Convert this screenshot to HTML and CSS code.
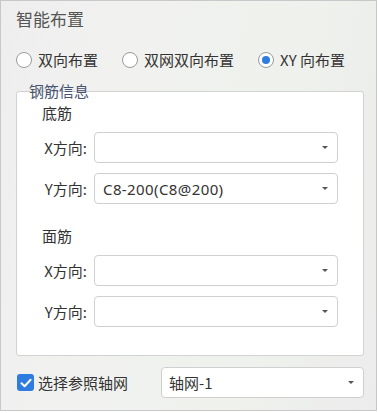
FILE: index.html
```html
<!DOCTYPE html>
<html lang="zh-CN">
<head>
<meta charset="utf-8">
<title>智能布置</title>
<link rel="stylesheet" href="styles.css">
</head>
<body>
<div class="window">
  <div class="title">智能布置</div>
  <div class="radios">
    <label class="radio"><span class="dot"></span>双向布置</label>
    <label class="radio"><span class="dot"></span>双网双向布置</label>
    <label class="radio"><span class="dot checked"></span>XY 向布置</label>
  </div>
  <div class="legend">钢筋信息</div>
  <div class="group">
    <div class="section-title">底筋</div>
    <div class="field">
      <span class="label">X方向:</span>
      <div class="select"><span class="value"></span><span class="arrow"></span></div>
    </div>
    <div class="field">
      <span class="label">Y方向:</span>
      <div class="select"><span class="value latin">C8-200(C8@200)</span><span class="arrow"></span></div>
    </div>
    <div class="section-title second">面筋</div>
    <div class="field">
      <span class="label">X方向:</span>
      <div class="select"><span class="value"></span><span class="arrow"></span></div>
    </div>
    <div class="field">
      <span class="label">Y方向:</span>
      <div class="select"><span class="value"></span><span class="arrow"></span></div>
    </div>
  </div>
  <div class="bottom">
    <label class="check"><span class="box"><svg viewBox="0 0 16 16" width="16" height="16"><path d="M3.5 8.2 L6.6 11.2 L12.6 4.8" fill="none" stroke="#fff" stroke-width="2" stroke-linecap="round" stroke-linejoin="round"/></svg></span>选择参照轴网</label>
    <div class="select axis"><span class="value">轴网-1</span><span class="arrow"></span></div>
  </div>
</div>
</body>
</html>
```
FILE: styles.css
```css
html, body {
  margin: 0;
  padding: 0;
  background: #ffffff;
}
body {
  font-family: "Noto Sans CJK SC", "Noto Sans", sans-serif;
  color: #333333;
  font-size: 15px;
}
.window {
  width: 377px;
  height: 411px;
  box-sizing: border-box;
  border: 1px solid #c8c8c8;
  background: linear-gradient(100deg, #eeeeee 0%, #f1f2f0 30%, #eef1ec 70%, #ececec 100%);
  padding: 7px 14px 0 15px;
}
.title {
  font-size: 17px;
  line-height: 22px;
  color: #555555;
}
.radios {
  display: flex;
  align-items: center;
  margin-top: 20px;
  height: 20px;
  gap: 24px;
}
.radio {
  display: flex;
  align-items: center;
  gap: 6px;
  line-height: 20px;
  color: #333333;
}
.dot {
  width: 16px;
  height: 16px;
  box-sizing: border-box;
  border: 1px solid #9a9a9a;
  border-radius: 50%;
  background: #ffffff;
  position: relative;
}
.dot.checked::after {
  content: "";
  position: absolute;
  left: 3px;
  top: 3px;
  width: 8px;
  height: 8px;
  border-radius: 50%;
  background: #2f7ce0;
}
.legend {
  position: relative;
  z-index: 1;
  margin: 12px 0 0 13px;
  font-size: 15px;
  line-height: 18px;
  height: 18px;
  color: #475470;
  width: max-content;
}
.group {
  margin-top: -9px;
  padding: 11px 25px 28px 25px;
  width: 348px;
  box-sizing: border-box;
  border: 1px solid #d2d2d2;
  border-radius: 3px;
  background: #ffffff;
}
.section-title {
  line-height: 20px;
  color: #333333;
}
.section-title.second {
  margin-top: 22px;
}
.field {
  display: flex;
  align-items: center;
  margin-top: 9px;
}
.field + .field {
  margin-top: 10px;
}
.label {
  width: 45px;
  margin-right: 7px;
  text-align: right;
  color: #333333;
  white-space: nowrap;
}
.select {
  flex: 1;
  height: 31px;
  box-sizing: border-box;
  border: 1px solid #d0d0d0;
  border-radius: 4px;
  background: #ffffff;
  display: flex;
  align-items: center;
  padding: 0 8px;
}
.value {
  flex: 1;
  color: #333333;
  white-space: nowrap;
}
.value.latin {
  font-family: "Noto Sans", "Noto Sans CJK SC", sans-serif;
  letter-spacing: 0.4px;
}
.arrow {
  width: 0;
  height: 0;
  border-left: 3px solid transparent;
  border-right: 3px solid transparent;
  border-top: 3px solid #555555;
  margin-right: 1px;
}
.bottom {
  display: flex;
  align-items: center;
  margin-top: 11px;
  width: 348px;
}
.check {
  display: flex;
  align-items: center;
  gap: 4px;
  margin-left: 1px;
  color: #333333;
}
.box {
  width: 17px;
  height: 17px;
  border-radius: 3px;
  background: #2f7ce0;
  display: flex;
  align-items: center;
  justify-content: center;
}
.select.axis {
  flex: none;
  width: 203px;
  height: 31px;
  margin-left: auto;
  padding-left: 7px;
}
```
